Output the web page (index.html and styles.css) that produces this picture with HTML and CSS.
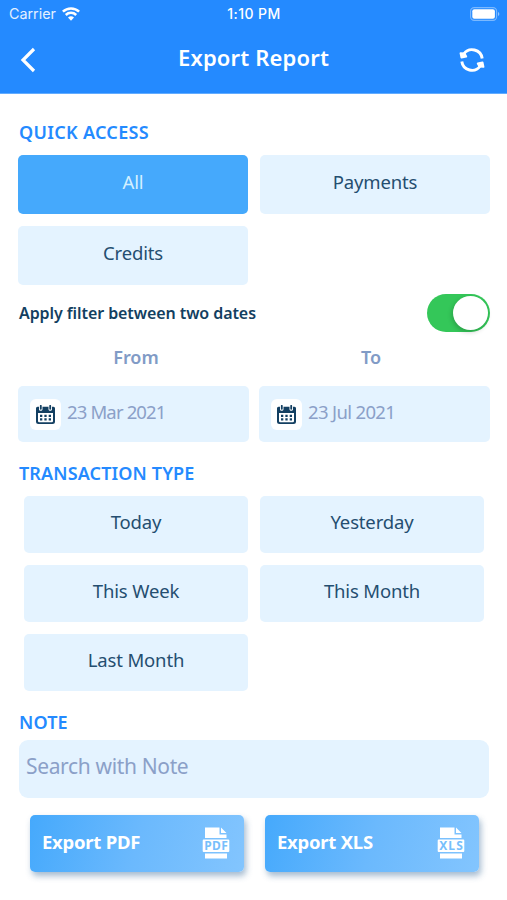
FILE: index.html
```html
<!DOCTYPE html>
<html lang="en">
<head>
<meta charset="utf-8">
<title>Export Report</title>
<link rel="stylesheet" href="styles.css">
</head>
<body>
<header class="header">
  <div class="status">
    <div class="carrier"><span>Carrier</span>
      <svg width="18" height="14" viewBox="0 0 18 14" fill="none" stroke="#fff" stroke-width="2.5"><path d="M.9 4.700a11.600 11.600 0 0 1 16.200 0"/><path d="M3.800 8a7.400 7.400 0 0 1 10.400 0"/><path d="M6 10.600a4.300 4.300 0 0 1 6 0L9 13.800z" fill="#fff" stroke="none"/></svg>
    </div>
    <span class="clock">1:10 PM</span>
    <svg class="battery" width="30" height="14" viewBox="0 0 30 14"><rect x=".6" y=".6" width="26" height="12.8" rx="3.6" fill="none" stroke="#fff" stroke-opacity=".4" stroke-width="1.1"/><rect x="2.3" y="2.3" width="22.6" height="9.4" rx="2" fill="#fff"/><path d="M28 5v4c1.8-.6 1.8-3.4 0-4z" fill="#fff" fill-opacity=".5"/></svg>
  </div>
  <div class="navbar">
    <svg width="16" height="26" viewBox="0 0 16 26" fill="none" stroke="#fff" stroke-width="3.2"><path d="M14 2 3 13l11 11"/></svg>
    <h1 class="title">Export Report</h1>
    <svg width="26" height="26" viewBox="0 0 26 26" fill="none" stroke="#fff" stroke-width="2.900"><path d="M4.800 7A10.200 10.200 0 0 1 23.200 11.500"/><path d="M21.200 19A10.200 10.200 0 0 1 2.800 14.500"/><path d="M1.600 6.200 2.500 10.600 7.200 9.600 5.500 6.500zM24.400 19.800 23.500 15.400 18.800 16.400 20.500 19.500z" fill="#fff" stroke-width="2" stroke-linejoin="round"/></svg>
  </div>
</header>
<main class="content">
  <h2 class="heading"><span class="t-quick">QUICK ACCESS</span></h2>
  <div class="quick-grid">
    <button class="option selected"><span>All</span></button>
    <button class="option"><span>Payments</span></button>
    <button class="option"><span>Credits</span></button>
  </div>
  <div class="filter-row"><span class="filter-label">Apply filter between two dates</span><span class="switch"><span class="knob"></span></span></div>
  <div class="dates">
    <div class="date-col"><span class="date-label">From</span>
      <div class="date-box"><span class="cal"><svg width="19" height="19" viewBox="0 0 19 19"><path fill="#133f61" fill-rule="evenodd" d="M1.5 1.8H3v2.5c0 2 3.5 2 3.5 0V1.8h6v2.5c0 2 3.500 2 3.500 0V1.800h1.500Q19 1.800 19 3.300V16.500Q19 19 16.500 19H2.500Q0 19 0 16.500V3.300Q0 1.800 1.500 1.800zM2 8v8q0 1.200 1.200 1.200h12.600q1.200 0 1.200-1.200V8z"/><path d="M4.800.8v3M14.200.8v3" stroke="#133f61" stroke-width="1.800" stroke-linecap="round"/><path d="M4 10.800h11M4 14.300h11" stroke="#133f61" stroke-width="2.300" stroke-dasharray="2.300 2.050"/></svg></span><span class="date">23 Mar 2021</span></div></div>
    <div class="date-col"><span class="date-label">To</span>
      <div class="date-box"><span class="cal"><svg width="19" height="19" viewBox="0 0 19 19"><path fill="#133f61" fill-rule="evenodd" d="M1.5 1.8H3v2.5c0 2 3.5 2 3.5 0V1.8h6v2.5c0 2 3.500 2 3.500 0V1.800h1.500Q19 1.800 19 3.300V16.500Q19 19 16.500 19H2.500Q0 19 0 16.500V3.300Q0 1.800 1.500 1.800zM2 8v8q0 1.200 1.200 1.200h12.600q1.200 0 1.200-1.200V8z"/><path d="M4.800.8v3M14.200.8v3" stroke="#133f61" stroke-width="1.800" stroke-linecap="round"/><path d="M4 10.800h11M4 14.300h11" stroke="#133f61" stroke-width="2.300" stroke-dasharray="2.300 2.050"/></svg></span><span class="date">23 Jul 2021</span></div></div>
  </div>
  <h2 class="heading type-heading"><span>TRANSACTION TYPE</span></h2>
  <div class="type-grid">
    <button class="option"><span>Today</span></button>
    <button class="option"><span>Yesterday</span></button>
    <button class="option"><span>This Week</span></button>
    <button class="option"><span>This Month</span></button>
    <button class="option"><span>Last Month</span></button>
  </div>
  <h2 class="heading note-heading"><span>NOTE</span></h2>
  <div class="note"><span>Search with Note</span></div>
  <div class="exports">
    <button class="export"><span class="export-label">Export PDF</span>
      <svg width="28" height="32" viewBox="0 0 28 32"><path fill="#fff" d="M3 .500h14.500v7H24.500V11H3zM19 .500l5.500 5.500H19zM1.700 12.500h24.600q1 0 1 1v10.500q0 1-1 1H1.700q-1 0-1-1V13.500q0-1 1-1zM3 26.500h22v5H3z"/><text class="file-type" x="14" y="23" textLength="23.500" lengthAdjust="spacing">PDF</text></svg></button>
    <button class="export"><span class="export-label">Export XLS</span>
      <svg width="28" height="32" viewBox="0 0 28 32"><path fill="#fff" d="M3 .500h14.500v7H24.500V11H3zM19 .500l5.500 5.500H19zM1.700 12.500h24.600q1 0 1 1v10.500q0 1-1 1H1.700q-1 0-1-1V13.500q0-1 1-1zM3 26.500h22v5H3z"/><text class="file-type" x="14" y="23" textLength="23.500" lengthAdjust="spacing">XLS</text></svg></button>
  </div>
</main>
</body>
</html>
```
FILE: styles.css
```css
* { box-sizing: border-box; }
body { margin: 0; width: 507px; height: 900px; overflow: hidden; background: #fff; font-family: "Noto Sans", "Open Sans", sans-serif; color: #244e70; }
h1, h2 { margin: 0; font-weight: 600; }
button { border: 0; margin: 0; font: inherit; color: inherit; }
svg { display: block; flex: none; }
span { white-space: nowrap; }
.header { height: 94px; background: #248aff; color: #fff; border-bottom: 1px solid #62acff; }
.status { height: 27px; padding: 0 7px 0 9px; display: grid; grid-template-columns: 1fr auto 1fr; align-items: center; font: 14.3px/27px Inter, sans-serif; }
.carrier { display: flex; align-items: center; gap: 6px; color: #e4f0ff; }
.clock { font-weight: 500; font-size: 14px; letter-spacing: .45px; padding-right: 1px; }
.battery { justify-self: end; }
.navbar { height: 65px; padding: 0 22px 0 20px; display: flex; align-items: center; justify-content: space-between; }
.title { font-size: 22px; line-height: 30px; padding: 0 0 5px 12px; letter-spacing: .15px; }
.content { padding: 25px 17px 0 18px; }
.heading { height: 26px; padding-left: 1px; color: #248aff; font-size: 18px; line-height: 26px; letter-spacing: .12px; }
.t-quick { letter-spacing: .3px; }
.quick-grid { margin-top: 9.5px; display: grid; grid-template-columns: 230px 230px; grid-auto-rows: 59px; gap: 12px; }
.option { border-radius: 5px; background: #e4f3ff; font-size: 18.5px; letter-spacing: -.15px; line-height: 26px; padding: 0 0 5px; }
.selected { background: #45a9fc; color: #d3f0ff; }
.filter-row { margin-top: 8.5px; height: 39px; display: flex; align-items: center; justify-content: space-between; padding-left: 1px; }
.filter-label { font-size: 16px; font-weight: 600; letter-spacing: -.08px; color: #133f61; }
.switch { width: 63px; height: 38px; border-radius: 19px; background: #34c759; display: flex; justify-content: flex-end; padding: 2px; }
.knob { width: 35px; height: 34px; border-radius: 50%; background: #fff; box-shadow: -1px 2px 5px rgba(0,0,0,.2); }
.dates { display: grid; grid-template-columns: 231px 231px; gap: 10px; margin-top: 12px; }
.date-col { display: flex; flex-direction: column; }
.date-label { text-align: center; height: 42px; line-height: 26px; font-size: 18px; font-weight: 600; color: #819bc6; padding-left: 5px; }
.date-col + .date-col .date-label { padding: 0 7px 0 0; }
.date-box { height: 56px; border-radius: 5px; background: #e4f3ff; display: flex; align-items: center; gap: 6px; padding-left: 12px; color: #8ba0c8; }
.cal { width: 31px; height: 31px; border-radius: 6px; background: #fff; display: grid; place-items: center; }
.date { font-size: 18.5px; letter-spacing: -.85px; padding-bottom: 5px; }
.date-col + .date-col .date { letter-spacing: -.65px; }
.type-heading { margin-top: 18px; }
.type-grid { margin: 10px 0 0 6px; display: grid; grid-template-columns: 224px 224px; grid-auto-rows: 56.500px; gap: 12.500px 12px; }
.note-heading { margin-top: 18px; }
.note { margin: 5px 0 0 1px; width: 470px; height: 58px; border-radius: 9px; background: #e4f3ff; padding: 11px 7px; font-size: 21px; letter-spacing: -.35px; line-height: 30px; color: #8ba0c8; }
.exports { display: grid; grid-template-columns: 214px 214px; gap: 21px; margin: 17px 0 0 12px; }
.export { height: 57px; border-radius: 5px; background: linear-gradient(105deg, #45a9fc 0%, #6bb9fd 50%, #83c5fe 100%); box-shadow: 2px 4px 6px rgba(55,105,150,.45); color: #fff; display: flex; align-items: center; justify-content: space-between; padding: 0 14px 0 12px; }
.export-label { font-size: 18.500px; font-weight: 700; letter-spacing: -.25px; padding-bottom: 3px; }
.file-type { font: 700 12px "Noto Sans", sans-serif; fill: #77bffc; text-anchor: middle; }
```
